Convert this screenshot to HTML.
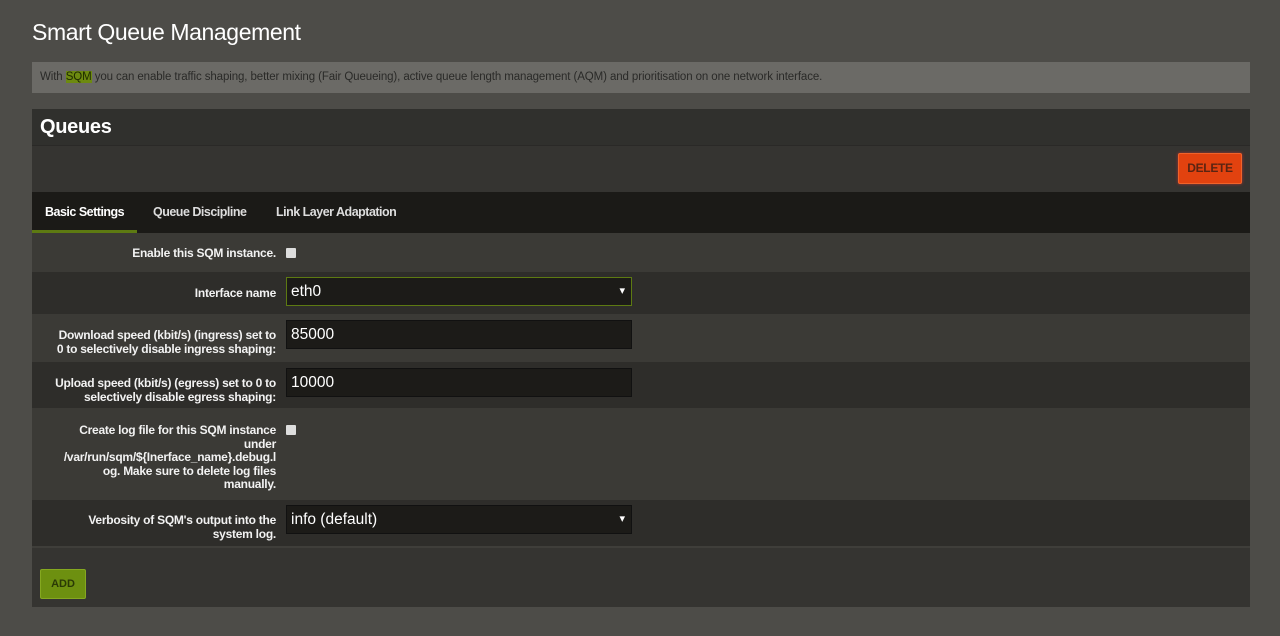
<!DOCTYPE html>
<html><head><meta charset="utf-8"><style>
*{box-sizing:border-box;margin:0;padding:0}
body{width:1280px;height:636px;background:#4d4c48;font-family:"Liberation Sans",sans-serif;color:#eee;overflow:hidden;position:relative}
h1{position:absolute;left:32px;top:19px;font-size:23px;font-weight:normal;color:#fff;letter-spacing:-0.4px}
.desc{position:absolute;left:32px;top:62px;width:1218px;height:31px;background:#6b6a66;color:#2a2a28;font-size:11.5px;line-height:31px;padding-left:8px;letter-spacing:-0.1px}
.desc b{background:#6d8a10;color:#1f2a00;font-weight:normal}
.panel{position:absolute;left:32px;top:109px;width:1218px;height:498px;background:#353431}
.ph{height:37px;border-bottom:1px solid #2a2927;font-size:20px;line-height:37px;padding-left:8px;color:#fff;font-weight:bold;background:#30302d;letter-spacing:-0.3px}
.del{position:absolute;right:8px;top:44px;width:64px;height:31px;background:#e2420f;border:1px solid #f0632a;border-radius:2px;color:#5a2412;font-size:12px;font-weight:bold;line-height:29px;text-align:center;box-shadow:0 0 3px #a33;letter-spacing:-0.3px}
.tabs{position:absolute;top:83px;left:0;width:1218px;height:41px;background:#1b1a17;font-size:12.5px;font-weight:bold;color:#ddd;letter-spacing:-0.5px}
.tabs span{position:absolute;top:13px}
.tabs .a{left:13px;color:#fff}
.tabs .u{position:absolute;left:0;top:38px;width:105px;height:3px;background:#5d7a12}
.row{position:absolute;left:0;width:1218px}
.l{position:absolute;right:974px;text-align:right;font-size:12px;line-height:13.5px;color:#f2f2f2;font-weight:bold;letter-spacing:-0.25px}
.cb{position:absolute;left:254px;width:10px;height:10px;background:#ddd;border-radius:1px}
.in{position:absolute;left:254px;width:346px;height:29px;background:#1c1b18;border:1px solid #111;color:#fff;font-family:"Liberation Sans",sans-serif;font-size:15.5px;line-height:27px;padding-left:4px}
.in.s::after{content:"▾";position:absolute;right:6px;top:0;font-size:11px}
.add{position:absolute;left:8px;top:460px;width:46px;height:30px;background:#6d9010;border:1px solid #85a820;border-radius:2px;color:#2a3a05;font-size:11px;line-height:28px;text-align:center;font-weight:bold}
</style></head><body>
<h1>Smart Queue Management</h1>
<div class="desc">With <b>SQM</b> you can enable traffic shaping, better mixing (Fair Queueing), active queue length management (AQM) and prioritisation on one network interface.</div>
<div class="panel">
<div class="ph">Queues</div>
<div class="del">DELETE</div>
<div class="tabs"><span class="a">Basic Settings</span><span style="left:121px">Queue Discipline</span><span style="left:244px">Link Layer Adaptation</span><div class="u"></div></div>
<div class="row" style="top:124px;height:39px;background:#3b3a36"><div class="l" style="top:14px">Enable this SQM instance.</div><div class="cb" style="top:15px"></div></div>
<div class="row" style="top:163px;height:42px;background:#2e2d2a"><div class="l" style="top:15px">Interface name</div><div class="in s" style="top:5px;border-color:#5d7a12">eth0</div></div>
<div class="row" style="top:205px;height:48px;background:#3b3a36"><div class="l" style="top:15px">Download speed (kbit/s) (ingress) set to<br>0 to selectively disable ingress shaping:</div><div class="in" style="top:6px">85000</div></div>
<div class="row" style="top:253px;height:46px;background:#2e2d2a"><div class="l" style="top:15px">Upload speed (kbit/s) (egress) set to 0 to<br>selectively disable egress shaping:</div><div class="in" style="top:6px">10000</div></div>
<div class="row" style="top:299px;height:92px;background:#3b3a36"><div class="l" style="top:16px">Create log file for this SQM instance<br>under<br>/var/run/sqm/${Inerface_name}.debug.l<br>og. Make sure to delete log files<br>manually.</div><div class="cb" style="top:17px"></div></div>
<div class="row" style="top:391px;height:46px;background:#2e2d2a"><div class="l" style="top:14px">Verbosity of SQM's output into the<br>system log.</div><div class="in s" style="top:5px">info (default)</div></div>
<div class="row" style="top:437px;height:2px;background:#3f3e3a"></div>
<div class="add">ADD</div>
</div>
</body></html>
